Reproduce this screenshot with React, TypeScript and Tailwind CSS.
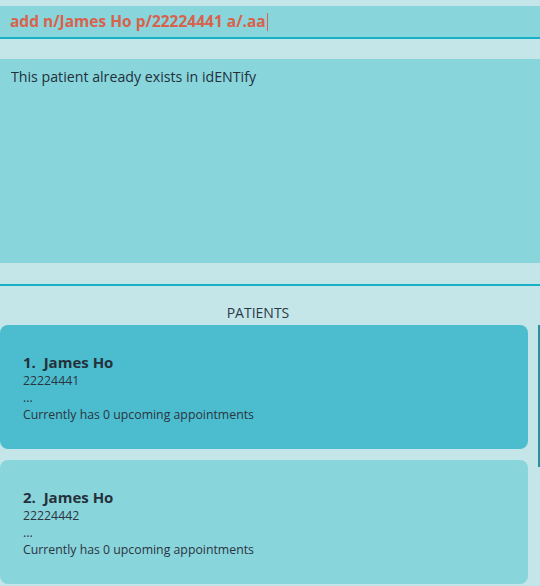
export default function App() {
  const patients = [
    { id: 1, name: "James Ho", phone: "22224441", selected: true },
    { id: 2, name: "James Ho", phone: "22224442", selected: false },
  ];

  return (
    <div
      className="w-[540px] h-[586px] overflow-hidden bg-[#c5e6e8] text-[#2b3440]"
      style={{ fontFamily: '"Open Sans", "Noto Sans", sans-serif' }}
    >
      <div className="pt-[6px]">
        <div className="h-[33px] bg-[#89d5dc] border-b-2 border-[#18b0c4] flex items-center px-[10px]">
          <span className="text-[15.5px] font-bold text-[#d8624c]">
            add n/James Ho p/22224441 a/.aa
          </span>
          <span className="w-px h-[18px] bg-[#d8624c] ml-px" />
        </div>
      </div>

      <div className="mt-[20px] h-[204px] bg-[#89d5dc] px-[11px] pt-[7px] text-[14.2px] text-[#22303a]">
        This patient already exists in idENTify
      </div>

      <div className="mt-[21px] border-t-2 border-[#18b0c4]" />

      <div className="text-center text-[14px] text-[#2b3a4a] pt-[16px] h-[39px] pr-[24px]">PATIENTS</div>
      <div className="flex flex-col gap-[11px] pr-[12px]">
        {patients.map((p) => (
          <div
            key={p.id}
            className={`h-[124px] rounded-[8px] pl-[23px] pt-[27px] ${
              p.selected ? "bg-[#4bbdcf]" : "bg-[#89d5dc]"
            }`}
          >
            <div className="text-[15px] font-bold text-[#25303a] leading-[20px]">
              {p.id}.&nbsp; {p.name}
            </div>
            <div className="text-[12.3px] leading-[17px]">{p.phone}</div>
            <div className="text-[12.3px] leading-[17px]">...</div>
            <div className="text-[12.3px] leading-[18px]">Currently has 0 upcoming appointments</div>
          </div>
        ))}
      </div>
      <div className="absolute left-[538px] top-[325px] w-[2px] h-[142px] bg-[#2a8fa0]" />
    </div>
  );
}
